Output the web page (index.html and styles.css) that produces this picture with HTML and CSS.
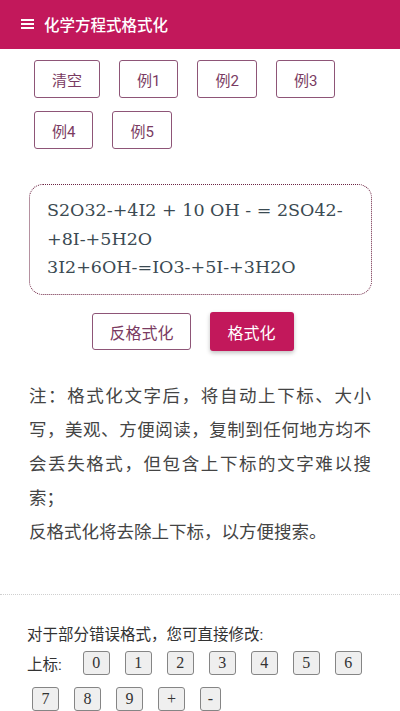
FILE: index.html
```html
<!DOCTYPE html>
<html lang="zh-CN">
<head>
  <meta charset="UTF-8" />
  <title>化学方程式格式化</title>
  <link rel="stylesheet" href="styles.css">
</head>
<body>

  <header class="app-bar">
    <svg class="menu-icon" width="13" height="10" viewBox="0 0 13 10">
      <rect x="0" y="0" width="13" height="2" fill="#fff"/>
      <rect x="0" y="4" width="13" height="2" fill="#fff"/>
      <rect x="0" y="8" width="13" height="2" fill="#fff"/>
    </svg>
    <h1>化学方程式格式化</h1>
  </header>

  <div class="examples">
    <button class="outline-btn">清空</button>
    <button class="outline-btn">例1</button>
    <button class="outline-btn">例2</button>
    <button class="outline-btn">例3</button>
    <button class="outline-btn">例4</button>
    <button class="outline-btn">例5</button>
  </div>

  <div class="formula-box" contenteditable="true">S2O32-+4I2 + 10 OH - = 2SO42-+8I-+5H2O
3I2+6OH-=IO3-+5I-+3H2O</div>

  <div class="actions">
    <button class="outline-btn wide">反格式化</button>
    <button class="primary-btn">格式化</button>
  </div>

  <p class="note">注：格式化文字后，将自动上下标、大小写，美观、方便阅读，复制到任何地方均不会丢失格式，但包含上下标的文字难以搜索；</p>
  <p class="note">反格式化将去除上下标，以方便搜索。</p>

  <hr class="divider">

  <div class="manual">
    <p class="manual-title">对于部分错误格式，您可直接修改:</p>
    <div class="key-row">
      <span class="key-label">上标:</span>
      <button class="key">0</button>
      <button class="key">1</button>
      <button class="key">2</button>
      <button class="key">3</button>
      <button class="key">4</button>
      <button class="key">5</button>
      <button class="key">6</button>
      <button class="key">7</button>
      <button class="key">8</button>
      <button class="key">9</button>
      <button class="key">+</button>
      <button class="key narrow">-</button>
    </div>
  </div>

</body>
</html>
```

FILE: styles.css
```css
* {
  box-sizing: border-box;
  margin: 0;
  padding: 0;
}

body {
  font-family: Roboto, "Noto Sans CJK SC", sans-serif;
  background: #ffffff;
  color: #333;
}

.app-bar {
  height: 49px;
  background: #c2185b;
  display: flex;
  align-items: center;
  padding-left: 21px;
}

.menu-icon {
  margin-top: -2px;
}

.app-bar h1 {
  font-size: 15.5px;
  font-weight: 500;
  color: #fff;
  margin-left: 10px;
  margin-top: -2px;
}

.examples {
  display: flex;
  flex-wrap: wrap;
  gap: 13px 19px;
  padding: 11px 40px 0 34px;
}

.outline-btn {
  height: 38px;
  padding: 0 17px;
  background: #fff;
  border: 1px solid #8e5577;
  border-radius: 3px;
  color: #7a3b62;
  font-family: Roboto, "Noto Sans CJK SC", sans-serif;
  font-size: 15px;
}

.formula-box {
  margin: 35px 28px 0 29px;
  height: 111px;
  padding: 11px 14px 0 17px;
  border: 1px dotted #6d2443;
  border-radius: 14px;
  font-family: "DejaVu Serif", serif;
  font-size: 17.5px;
  line-height: 28.5px;
  color: #3b4a52;
  white-space: pre-wrap;
  outline: none;
}

.actions {
  display: flex;
  justify-content: center;
  gap: 19px;
  margin-top: 18px;
  padding-right: 14px;
}

.actions .wide {
  height: 37px;
  padding: 0 16px;
  font-size: 16px;
}

.primary-btn {
  height: 39px;
  padding: 0 18px;
  margin-top: -1px;
  background: #c2185b;
  border: none;
  border-radius: 3px;
  color: #fff;
  font-family: Roboto, "Noto Sans CJK SC", sans-serif;
  font-size: 16px;
  box-shadow: 0 2px 4px rgba(0, 0, 0, 0.25);
}

.note {
  margin: 0 29px 0 29px;
  font-size: 17.5px;
  line-height: 34px;
  text-align: justify;
  color: #444;
}

.actions + .note {
  margin-top: 28px;
}

.divider {
  border: none;
  border-top: 1px dotted #cfcfcf;
  margin-top: 45px;
}

.manual {
  padding: 28px 27px 0 27px;
}

.manual-title {
  font-size: 15.5px;
  line-height: 24px;
  color: #333;
}

.key-row {
  display: flex;
  flex-wrap: wrap;
  align-items: center;
  row-gap: 12px;
  margin-top: 4px;
}

.key-label {
  font-size: 15.5px;
  margin-right: 16px;
}

.key {
  width: 27px;
  height: 24px;
  margin: 0 10px 0 5px;
  background: #efefef;
  border: 1px solid #858585;
  border-radius: 3px;
  font-family: "Liberation Serif", serif;
  font-size: 16px;
  color: #333;
}

.key.narrow {
  width: 21px;
}
```
